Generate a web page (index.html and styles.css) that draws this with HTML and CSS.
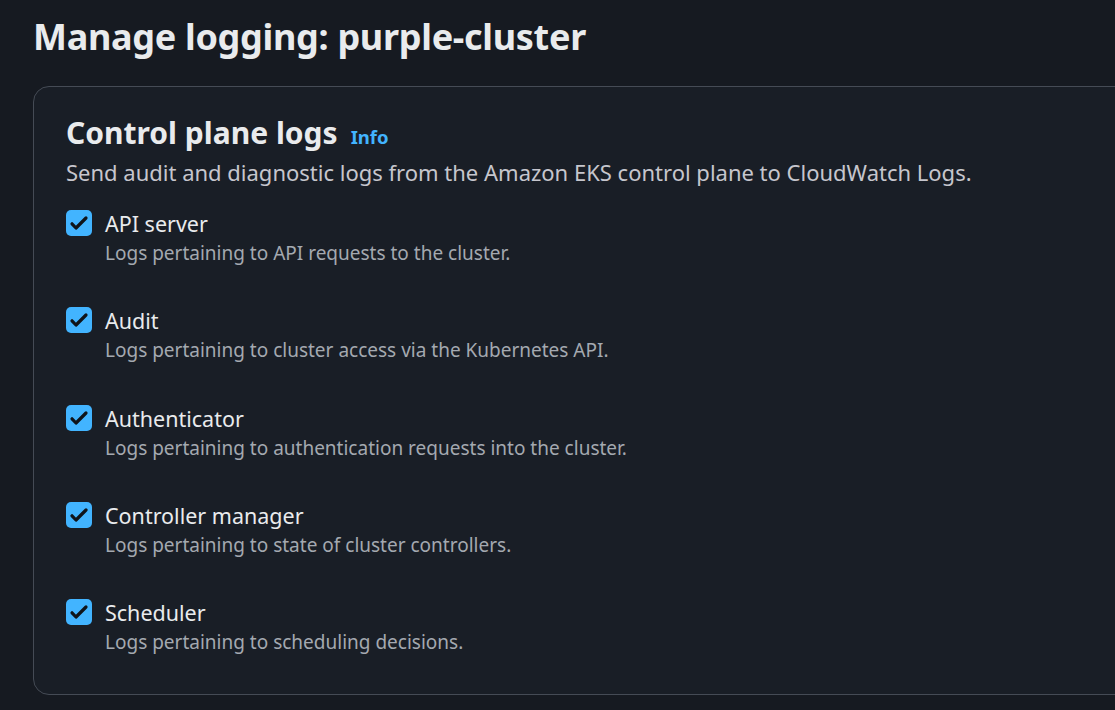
FILE: index.html
```html
<!DOCTYPE html>
<html lang="en">
<head>
<meta charset="utf-8">
<title>Manage logging: purple-cluster</title>
<link rel="stylesheet" href="styles.css">
</head>
<body>
<main class="page">
  <h1 class="title">Manage logging: purple-cluster</h1>
  <section class="container">
    <header class="container-header">
      <h2 class="heading">Control plane logs <a class="info" href="#">Info</a></h2>
      <p class="description">Send audit and diagnostic logs from the Amazon EKS control plane to CloudWatch Logs.</p>
    </header>
    <ul class="options">
      <li class="option">
        <span class="checkbox"><svg viewBox="0 0 26 26"><path d="M6 13.8l4 4.2 10-10" fill="none" stroke="#0f141a" stroke-width="3.2" stroke-linecap="round" stroke-linejoin="round"/></svg></span>
        <div class="option-text">
          <div class="label">API server</div>
          <div class="hint">Logs pertaining to API requests to the cluster.</div>
        </div>
      </li>
      <li class="option">
        <span class="checkbox"><svg viewBox="0 0 26 26"><path d="M6 13.8l4 4.2 10-10" fill="none" stroke="#0f141a" stroke-width="3.2" stroke-linecap="round" stroke-linejoin="round"/></svg></span>
        <div class="option-text">
          <div class="label">Audit</div>
          <div class="hint">Logs pertaining to cluster access via the Kubernetes API.</div>
        </div>
      </li>
      <li class="option">
        <span class="checkbox"><svg viewBox="0 0 26 26"><path d="M6 13.8l4 4.2 10-10" fill="none" stroke="#0f141a" stroke-width="3.2" stroke-linecap="round" stroke-linejoin="round"/></svg></span>
        <div class="option-text">
          <div class="label">Authenticator</div>
          <div class="hint">Logs pertaining to authentication requests into the cluster.</div>
        </div>
      </li>
      <li class="option">
        <span class="checkbox"><svg viewBox="0 0 26 26"><path d="M6 13.8l4 4.2 10-10" fill="none" stroke="#0f141a" stroke-width="3.2" stroke-linecap="round" stroke-linejoin="round"/></svg></span>
        <div class="option-text">
          <div class="label">Controller manager</div>
          <div class="hint">Logs pertaining to state of cluster controllers.</div>
        </div>
      </li>
      <li class="option">
        <span class="checkbox"><svg viewBox="0 0 26 26"><path d="M6 13.8l4 4.2 10-10" fill="none" stroke="#0f141a" stroke-width="3.2" stroke-linecap="round" stroke-linejoin="round"/></svg></span>
        <div class="option-text">
          <div class="label">Scheduler</div>
          <div class="hint">Logs pertaining to scheduling decisions.</div>
        </div>
      </li>
    </ul>
  </section>
</main>
</body>
</html>
```

FILE: styles.css
```css
* { box-sizing: border-box; }
html, body {
  margin: 0;
  padding: 0;
  background: #161a21;
  height: 100%;
  overflow: hidden;
}
body {
  font-family: "Noto Sans", "Open Sans", sans-serif;
  color: #e9ebed;
}
.page {
  padding: 14px 0 0 33px;
}
.title {
  margin: 0;
  font-size: 36px;
  line-height: 46px;
  font-weight: 700;
  color: #e9ebed;
  letter-spacing: -0.3px;
}
.container {
  margin-top: 26px;
  width: 1120px;
  background: #191e26;
  border: 1px solid #454b55;
  border-radius: 16px;
  padding: 28px 32px 37px 32px;
}
.heading {
  margin: 0;
  font-size: 30px;
  line-height: 36px;
  font-weight: 700;
  color: #e9ebed;
  display: flex;
  align-items: baseline;
  gap: 13px;
}
.info {
  font-size: 18.5px;
  font-weight: 700;
  color: #42b4ff;
  text-decoration: none;
}
.description {
  margin: 3px 0 0 0;
  font-size: 22px;
  line-height: 28px;
  color: #c6c6cd;
}
.options {
  list-style: none;
  margin: 24px 0 0 0;
  padding: 0;
  display: flex;
  flex-direction: column;
  gap: 39.25px;
}
.option {
  display: flex;
  align-items: flex-start;
  gap: 13px;
}
.checkbox {
  flex: none;
  width: 26px;
  height: 26px;
  margin-top: 0;
  border-radius: 5px;
  background: #42b4ff;
  display: flex;
}
.checkbox svg { width: 26px; height: 26px; }
.label {
  font-size: 21.5px;
  line-height: 28px;
  color: #e9ebed;
}
.hint {
  font-size: 19px;
  line-height: 30px;
  color: #a4a9b0;
}
```
